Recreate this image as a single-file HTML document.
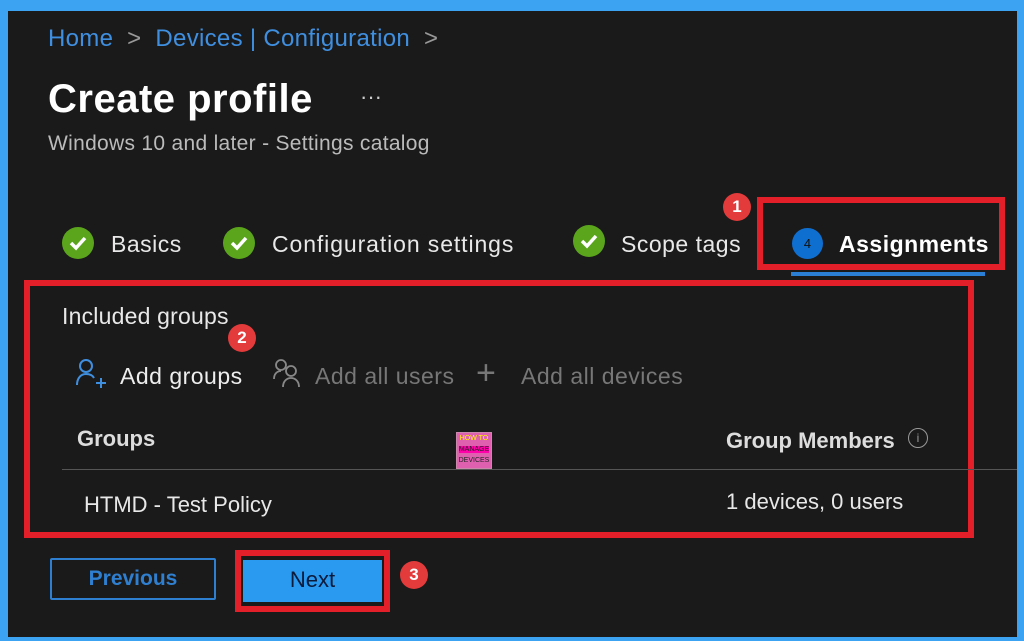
<!DOCTYPE html>
<html><head><meta charset="utf-8"><style>
body{margin:0;width:1024px;height:641px;background:#3ba3f2;font-family:"Liberation Sans",sans-serif;overflow:hidden;position:relative}
.p{position:absolute;left:8px;top:11px;width:1009px;height:626px;background:#1b1a1a}
.a{position:absolute;white-space:nowrap}
.rb{position:absolute;border:6px solid #e3202a;box-sizing:border-box}
.bd{position:absolute;width:28px;height:28px;border-radius:50%;background:#e33b3b;color:#fff;font-size:17px;font-weight:bold;text-align:center;line-height:28px}
.ck{position:absolute;width:32px;height:32px;border-radius:50%;background:#5aa51c}
.t{font-size:23px;letter-spacing:0.5px}
</style></head><body>
<div class="p"></div>
<div class="a" style="left:48px;top:25px;font-size:24px;color:#3f8fe0;letter-spacing:0.3px">Home <span style="color:#999">&nbsp;&gt;&nbsp;</span> Devices | Configuration <span style="color:#999">&nbsp;&gt;</span></div>
<div class="a" style="left:48px;top:77px;font-size:40px;font-weight:bold;color:#fff;letter-spacing:0.5px">Create profile</div>
<div class="a" style="left:360px;top:84px;font-size:22px;color:#ccc">···</div>
<div class="a" style="left:48px;top:132px;font-size:21px;color:#bbb;letter-spacing:0.3px">Windows 10 and later - Settings catalog</div>

<div class="ck" style="left:62px;top:227px"><svg width="32" height="32"><path d="M9 16l5 5 9-10" stroke="#fff" stroke-width="3.5" fill="none"/></svg></div>
<div class="a t" style="left:111px;top:231px;color:#e8e8e8">Basics</div>
<div class="ck" style="left:223px;top:227px"><svg width="32" height="32"><path d="M9 16l5 5 9-10" stroke="#fff" stroke-width="3.5" fill="none"/></svg></div>
<div class="a t" style="left:272px;top:231px;color:#e8e8e8;letter-spacing:0.9px">Configuration settings</div>
<div class="ck" style="left:573px;top:225px"><svg width="32" height="32"><path d="M9 16l5 5 9-10" stroke="#fff" stroke-width="3.5" fill="none"/></svg></div>
<div class="a t" style="left:621px;top:231px;color:#e8e8e8">Scope tags</div>
<div class="a" style="left:792px;top:228px;width:31px;height:31px;border-radius:50%;background:#0f6fd0;color:#111;font-size:13px;text-align:center;line-height:31px">4</div>
<div class="a t" style="left:839px;top:231px;font-weight:bold;color:#fff">Assignments</div>
<div class="a" style="left:791px;top:272px;width:194px;height:4px;background:#2b7fd4"></div>
<div class="rb" style="left:757px;top:197px;width:248px;height:73px"></div>
<div class="bd" style="left:723px;top:193px">1</div>

<div class="rb" style="left:24px;top:280px;width:950px;height:258px"></div>
<div class="a t" style="left:62px;top:303px;color:#e8e8e8;letter-spacing:0.2px">Included groups</div>
<div class="bd" style="left:228px;top:324px">2</div>
<svg class="a" style="left:74px;top:357px" width="34" height="34"><circle cx="12" cy="9" r="6" stroke="#3f8fe0" stroke-width="2" fill="none"/><path d="M3 28c0-7 4-11 9-11s7 2 8 4" stroke="#3f8fe0" stroke-width="2" fill="none"/><path d="M27 21v10M22 26h10" stroke="#3f8fe0" stroke-width="2"/></svg>
<div class="a t" style="left:120px;top:363px;color:#eee">Add groups</div>
<svg class="a" style="left:272px;top:357px" width="32" height="32"><circle cx="9" cy="8" r="5" stroke="#888" stroke-width="1.8" fill="none"/><circle cx="19" cy="14" r="5" stroke="#888" stroke-width="1.8" fill="none"/><path d="M2 22c0-5 3-8 7-8M11 30c0-6 4-9 8-9s8 3 8 9" stroke="#888" stroke-width="1.8" fill="none"/></svg>
<div class="a t" style="left:315px;top:363px;color:#777">Add all users</div>
<div class="a" style="left:476px;top:354px;font-size:34px;color:#777;font-weight:300">+</div>
<div class="a t" style="left:521px;top:363px;color:#777">Add all devices</div>
<div class="a" style="left:77px;top:426px;font-size:22px;font-weight:bold;color:#ddd">Groups</div>
<div class="a" style="left:456px;top:432px;width:34px;height:35px;background:#e060b0;border:1px solid #c8a;font-size:7px;color:#ff0;text-align:center;line-height:11px">HOW TO<br><span style="color:#222;background:#f0a">MANAGE</span><br><span style="color:#222">DEVICES</span></div>
<div class="a" style="left:726px;top:428px;font-size:22px;font-weight:bold;color:#ddd">Group Members</div>
<div class="a" style="left:908px;top:428px;width:18px;height:18px;border:1.5px solid #999;border-radius:50%;color:#999;font-size:12px;text-align:center;line-height:18px">i</div>
<div class="a" style="left:62px;top:469px;width:955px;height:1px;background:#555"></div>
<div class="a" style="left:84px;top:492px;font-size:22px;color:#e8e8e8">HTMD - Test Policy</div>
<div class="a" style="left:726px;top:489px;font-size:22px;color:#e8e8e8">1 devices, 0 users</div>

<div class="a" style="left:50px;top:558px;width:166px;height:42px;border:2px solid #2f7fd0;border-radius:2px;box-sizing:border-box;color:#2f7fd0;font-size:21px;font-weight:bold;text-align:center;line-height:38px">Previous</div>
<div class="rb" style="left:235px;top:550px;width:155px;height:62px"></div>
<div class="a" style="left:243px;top:560px;width:139px;height:42px;background:#2a9af0;color:#0a1a3a;font-size:22px;text-align:center;line-height:40px">Next</div>
<div class="bd" style="left:400px;top:561px">3</div>
</body></html>
